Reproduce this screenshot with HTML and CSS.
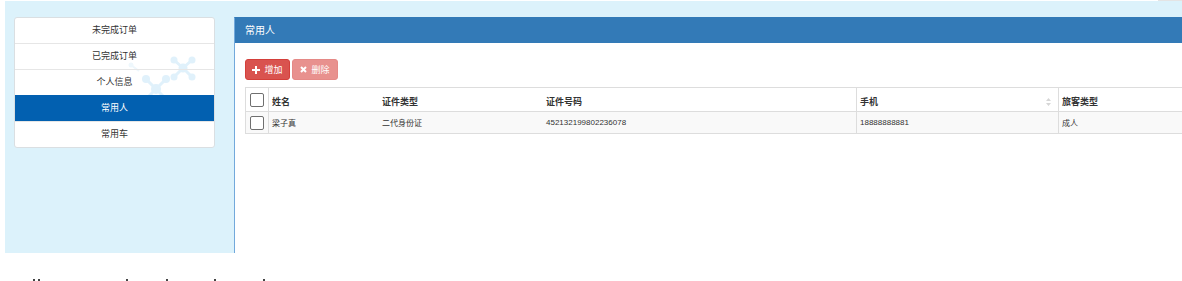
FILE: index.html
```html
<!DOCTYPE html>
<html lang="zh-CN">
<head>
<meta charset="utf-8">
<title>常用人</title>
<link rel="stylesheet" href="styles.css">
</head>
<body>
<div class="topline"><span class="topline-gray"></span></div>
<div class="page">
  <div class="sidebar">
    <ul class="menu">
      <svg class="deco" width="200" height="80" viewBox="0 0 200 80" aria-hidden="true">
        <g stroke="#e0f1fb" stroke-width="3" fill="#e0f1fb" stroke-linecap="round">
          <line x1="168" y1="50" x2="159" y2="42"/>
          <line x1="168" y1="50" x2="177" y2="42"/>
          <line x1="168" y1="50" x2="159" y2="59"/>
          <line x1="168" y1="50" x2="177" y2="59"/>
          <circle cx="168" cy="50" r="4.5" stroke="none"/>
          <circle cx="159" cy="42" r="3.5" stroke="none"/>
          <circle cx="177" cy="42" r="3.5" stroke="none"/>
          <circle cx="159" cy="59" r="3.5" stroke="none"/>
          <circle cx="177" cy="59" r="3.5" stroke="none"/>
          <line x1="141" y1="71" x2="131" y2="61"/>
          <line x1="141" y1="71" x2="151" y2="61"/>
          <line x1="141" y1="71" x2="131" y2="81"/>
          <line x1="141" y1="71" x2="151" y2="81"/>
          <circle cx="141" cy="71" r="5" stroke="none"/>
          <circle cx="131" cy="61" r="4" stroke="none"/>
          <circle cx="151" cy="61" r="4" stroke="none"/>
        </g>
        <g stroke="#eef7fc" stroke-width="2" fill="#eef7fc">
          <line x1="116" y1="47" x2="124" y2="53"/>
          <circle cx="116" cy="47" r="2.5" stroke="none"/>
        </g>
      </svg>
      <li class="item">未完成订单</li>
      <li class="item">已完成订单</li>
      <li class="item">个人信息</li>
      <li class="item active">常用人</li>
      <li class="item">常用车</li>
    </ul>
  </div>
  <div class="panel">
    <div class="panel-heading">常用人</div>
    <div class="panel-body">
      <div class="toolbar">
        <button class="btn btn-add" type="button">
          <svg class="ico" width="8" height="8" viewBox="0 0 8 8" aria-hidden="true"><path d="M3 0h2v3h3v2H5v3H3V5H0V3h3z" fill="#fff"/></svg>
          <span>增加</span>
        </button>
        <button class="btn btn-del" type="button">
          <svg class="ico" width="7" height="7" viewBox="0 0 7 7" aria-hidden="true"><path d="M1 1L6 6M6 1L1 6" stroke="#fff" stroke-width="2"/></svg>
          <span>删除</span>
        </button>
      </div>
      <table class="grid">
        <colgroup>
          <col class="c-chk"><col class="c-name"><col class="c-type"><col class="c-no"><col class="c-phone"><col class="c-kind">
        </colgroup>
        <thead>
          <tr>
            <th class="chk"><span class="box"></span></th>
            <th class="sep">姓名</th>
            <th>证件类型</th>
            <th>证件号码</th>
            <th class="sep"><div class="sortable"><span>手机</span>
              <svg width="5" height="8" viewBox="0 0 5 8" aria-hidden="true"><path d="M2.5 0L5 3H0z M2.5 8L5 5H0z" fill="#d6d6d6"/></svg></div></th>
            <th class="sep">旅客类型</th>
          </tr>
        </thead>
        <tbody>
          <tr>
            <td class="chk"><span class="box"></span></td>
            <td class="sep">梁子真</td>
            <td>二代身份证</td>
            <td>452132199802236078</td>
            <td class="sep">18888888881</td>
            <td class="sep">成人</td>
          </tr>
        </tbody>
      </table>
    </div>
  </div>
</div>
<div class="footer">
  <span class="mark m1"></span><span class="mark m2"></span><span class="mark m3"></span><span class="mark m4"></span><span class="mark m5"></span><span class="mark m6"></span>
</div>
</body>
</html>
```

FILE: styles.css
```css
html, body {
  margin: 0;
  padding: 0;
  overflow: hidden;
  background: #fff;
  font-family: "Liberation Sans", "Noto Sans CJK SC", sans-serif;
  color: #333;
}

.topline {
  height: 1px;
  display: flex;
  justify-content: flex-end;
}
.topline-gray {
  width: 24px;
  height: 1px;
  background: #e4e4e4;
}

.page {
  margin-left: 5px;
  height: 252px;
  box-sizing: border-box;
  padding: 16px 0 0 9px;
  background: #dcf2fb;
  display: flex;
  gap: 19px;
  overflow: hidden;
}

.sidebar {
  flex: 0 0 201px;
  align-self: flex-start;
}

.menu {
  position: relative;
  list-style: none;
  margin: 0;
  padding: 0;
  background: #fff;
  border: 1px solid #dadfe2;
  border-radius: 3px;
  overflow: hidden;
}
.deco {
  position: absolute;
  left: 0;
  top: 0;
}
.item {
  position: relative;
  height: 25px;
  line-height: 25px;
  text-align: center;
  font-size: 9px;
  color: #333;
  border-top: 1px solid #e6e6e6;
}
.item:first-of-type {
  border-top: none;
}
.item.active {
  background: #0260b0;
  border-top-color: #0260b0;
  color: #fff;
}

.panel {
  flex: 0 0 1000px;
  background: #fff;
  border: 1px solid #337ab7;
  border-left-color: #72a9db;
  border-bottom: none;
}
.panel-heading {
  height: 25px;
  line-height: 25px;
  padding-left: 10px;
  background: #337ab7;
  color: #fff;
  font-size: 10px;
}
.panel-body {
  padding: 16px 0 0 10px;
}

.toolbar {
  display: flex;
  gap: 2px;
  height: 21px;
}
.btn {
  display: inline-flex;
  align-items: center;
  justify-content: center;
  gap: 4px;
  height: 21px;
  padding: 0;
  border-radius: 3px;
  color: #fff;
  font-family: inherit;
  font-size: 9px;
  cursor: pointer;
}
.btn-add {
  width: 45px;
  background: #d9534f;
  border: 1px solid #d43f3a;
}
.btn-del {
  width: 46px;
  background: #e8918e;
  border: 1px solid #e58986;
}

.grid {
  margin-top: 7px;
  width: 1000px;
  table-layout: fixed;
  border-collapse: separate;
  border-spacing: 0;
  border: 1px solid #dddddd;
}
.c-chk { width: 22px; }
.c-name { width: 110px; }
.c-type { width: 164px; }
.c-no { width: 314px; }
.c-phone { width: 202px; }
.c-kind { width: 188px; }

.grid th {
  height: 24px;
  box-sizing: border-box;
  padding: 0 4px 3px 3px;
  vertical-align: bottom;
  text-align: left;
  font-size: 9px;
  line-height: 12px;
  font-weight: bold;
  color: #333;
  border-bottom: 1px solid #dddddd;
}
.grid td {
  height: 21px;
  box-sizing: border-box;
  padding: 0 4px 0 3px;
  vertical-align: middle;
  font-size: 8px;
  color: #333;
  background: #f9f9f9;
}
.grid .sep {
  border-left: 1px solid #dddddd;
}
.grid .chk {
  padding: 0 0 0 4px;
  vertical-align: middle;
}
.grid td:nth-child(3),
.grid td:nth-child(4),
.grid th:nth-child(3),
.grid th:nth-child(4) {
  padding-left: 4px;
}
.box {
  display: block;
  width: 14px;
  height: 14px;
  box-sizing: border-box;
  border: 1px solid #6f6f6f;
  border-radius: 2px;
  background: #fff;
}
.sortable {
  display: flex;
  justify-content: space-between;
  align-items: flex-end;
}
.sortable svg {
  margin-bottom: 2px;
  margin-right: 3px;
}

.footer {
  display: flex;
  align-items: flex-end;
  height: 28px;
}
.mark {
  width: 2px;
  height: 2px;
  background: #444;
}
.m1 { margin-left: 33px; }
.m2 { margin-left: 3px; }
.m3 { margin-left: 86px; }
.m4 { margin-left: 38px; }
.m5 { margin-left: 46px; }
.m6 { margin-left: 47px; }
```
